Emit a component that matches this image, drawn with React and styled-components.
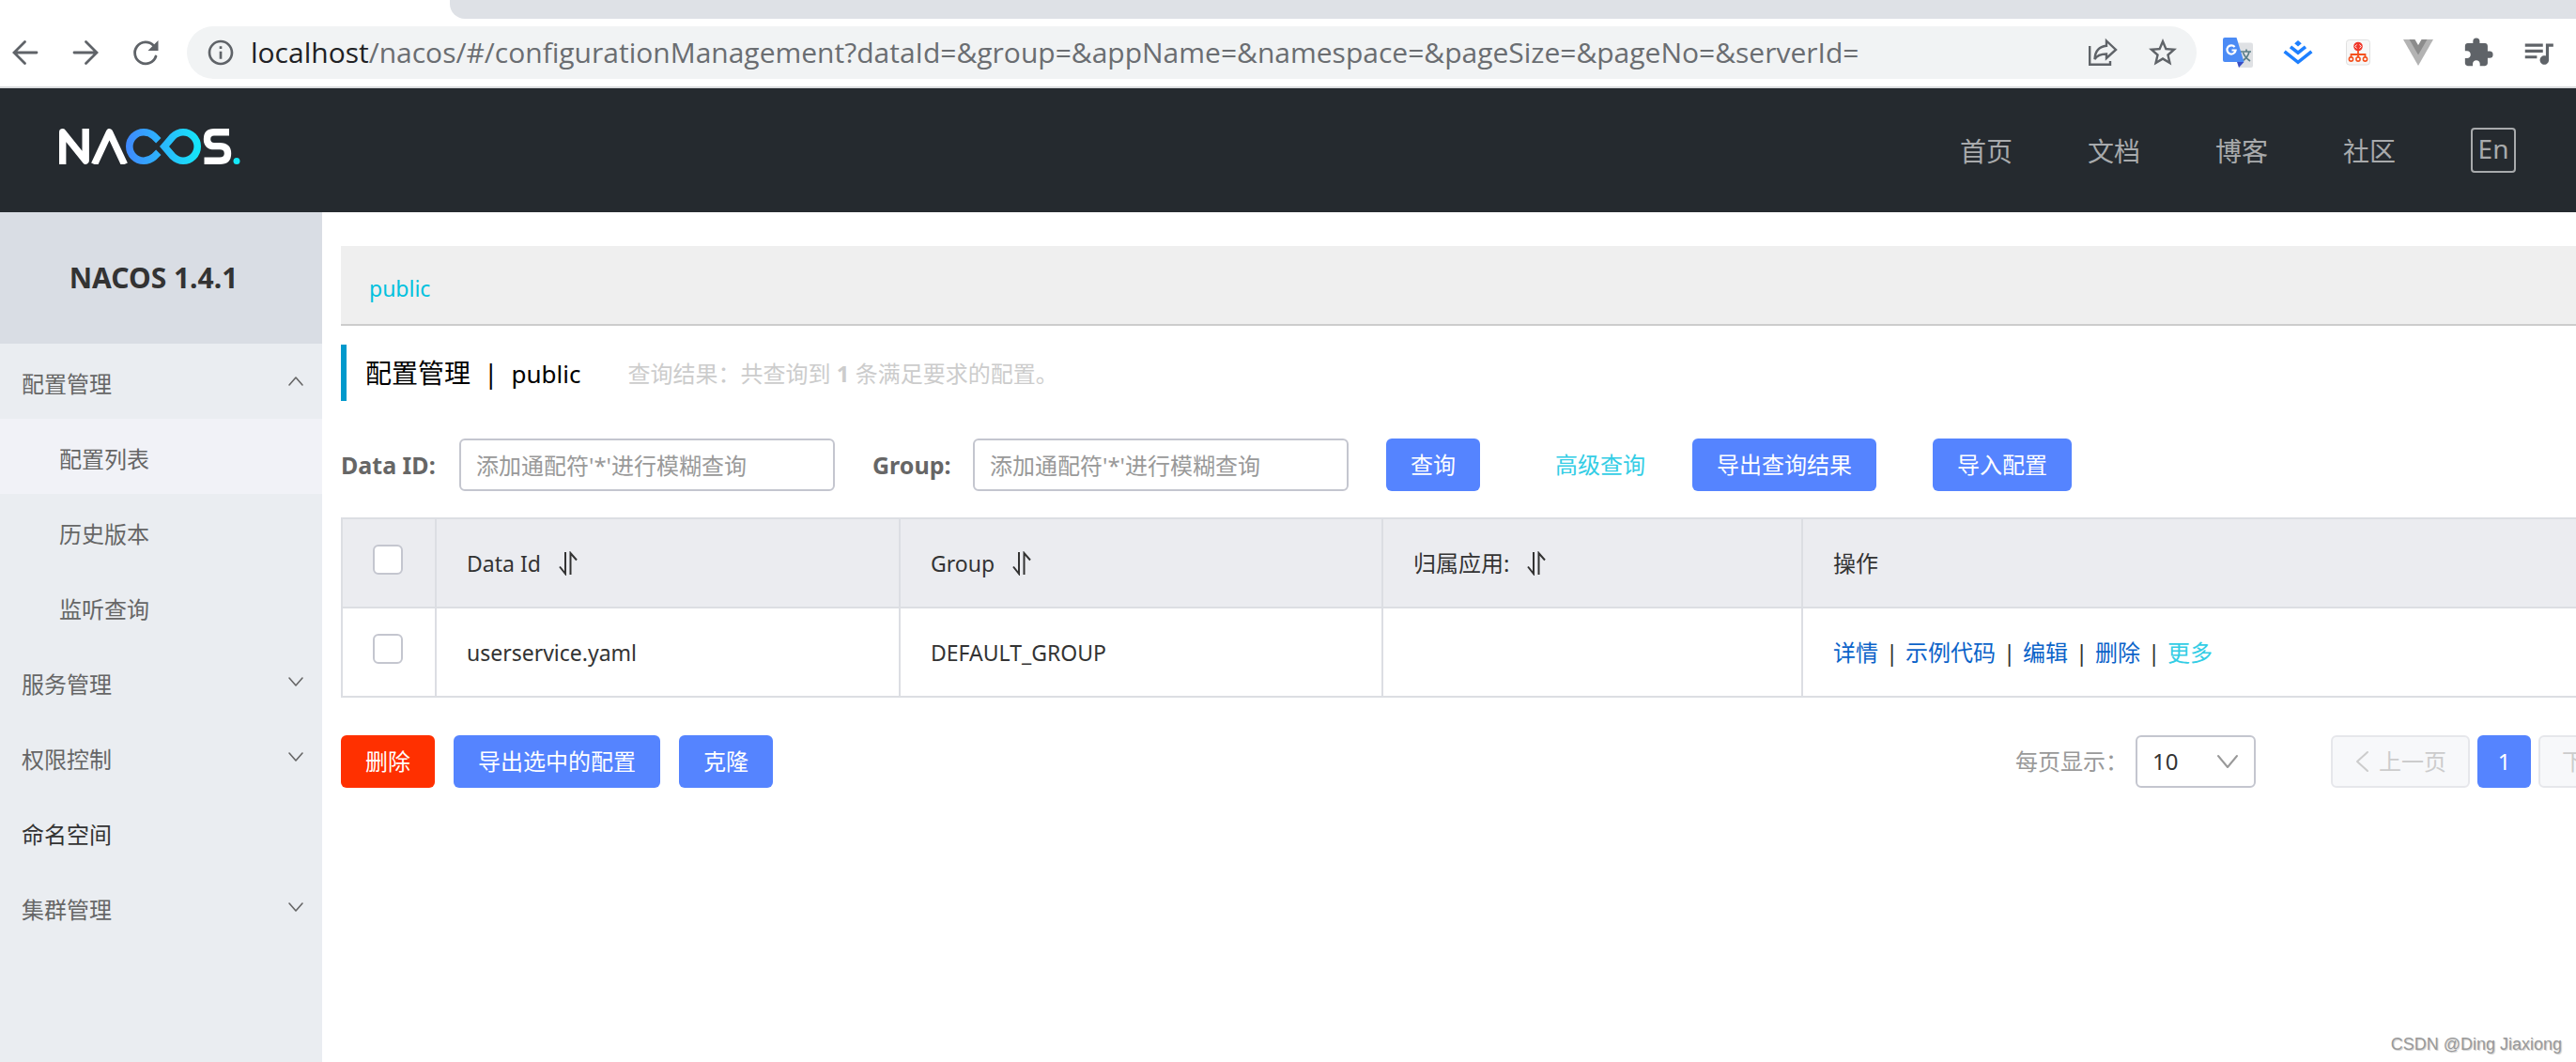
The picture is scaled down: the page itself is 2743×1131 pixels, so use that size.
import React, { useState } from 'react';
import styled, { createGlobalStyle } from 'styled-components';
import { MdInfoOutline, MdStarBorder, MdExtension, MdQueueMusic } from 'react-icons/md';

const UI_FONT = '"Noto Sans", "Noto Sans CJK SC", sans-serif';

const GlobalStyle = createGlobalStyle`
  *, *::before, *::after { box-sizing: border-box; }
  body {
    margin: 0;
    background: #fff;
    color: #333;
    font: 24px/36px ${UI_FONT};
  }
  button, input, select { font: inherit; margin: 0; }
  a { text-decoration: none; }
  button { cursor: pointer; }
`;

const Page = styled.div`
  display: flex;
  flex-direction: column;
  min-height: 100vh;
  overflow: hidden;
  position: relative;
`;

/* ---------- browser chrome ---------- */

const TabStrip = styled.div`
  height: 20px;
  margin-left: 479px;
  background: #dee1e6;
  border-bottom-left-radius: 16px;
`;

const Toolbar = styled.div`
  display: flex;
  align-items: center;
  height: 74px;
  padding: 8px 8px 8px 0;
  border-bottom: 2px solid #d9dbdd;
  color: #5f6368;
`;

const ToolButton = styled.button`
  display: flex;
  align-items: center;
  justify-content: center;
  flex: none;
  width: 64px;
  height: 56px;
  padding: 0;
  border: 0;
  background: none;
  color: inherit;
`;

const NavButtons = styled.div`
  display: flex;
  margin: 0 12px 0 -5px;
`;

const AddressBar = styled.div`
  display: flex;
  align-items: center;
  flex: 1;
  min-width: 0;
  height: 56px;
  padding: 0 4px 0 20px;
  border-radius: 28px;
  background: #f1f3f4;
`;

const Address = styled.div`
  flex: 1;
  min-width: 0;
  margin-left: 16px;
  overflow: hidden;
  white-space: nowrap;
  font: 30px/40px "Open Sans", "Noto Sans", sans-serif;
  color: #6a6d71;
  outline: none;
`;

const Host = styled.span`
  color: #202124;
`;

const Extensions = styled.div`
  display: flex;
  margin-left: 12px;
`;

/* ---------- site header ---------- */

const SiteHeader = styled.header`
  display: flex;
  align-items: center;
  justify-content: space-between;
  height: 132px;
  padding: 0 64px 0 63px;
  background: #252a2f;
`;

const LogoLink = styled.a`
  display: block;
  height: 38px;
  margin-bottom: 8px;
`;

const SiteNav = styled.nav`
  display: flex;
  align-items: center;
  gap: 80px;
`;

const SiteLink = styled.a`
  padding-top: 2px;
  font-size: 28px;
  line-height: 40px;
  color: #a8aaac;
`;

const LangButton = styled.button`
  width: 48px;
  height: 48px;
  padding: 0 0 4px;
  border: 2px solid #a8aaac;
  border-radius: 4px;
  background: none;
  color: #a8aaac;
  font-size: 28px;
  line-height: 40px;
`;

/* ---------- sidebar ---------- */

const Body = styled.div`
  display: flex;
  flex: 1;
`;

const Sidebar = styled.aside`
  flex: none;
  width: 343px;
  background: #eaedf1;
`;

const Version = styled.h1`
  margin: 0;
  padding-right: 16px;
  background: #d9dde4;
  font-size: 30px;
  line-height: 140px;
  text-align: center;
`;

const Menu = styled.ul`
  margin: 0;
  padding: 0;
  list-style: none;
`;

const MenuLink = styled.a`
  display: flex;
  align-items: center;
  justify-content: space-between;
  height: 80px;
  padding: 6px 19px 0 ${(p) => (p.$nested ? 63 : 23)}px;
  background: ${(p) => (p.$active ? '#f1f2f7' : 'transparent')};
  color: ${(p) => (p.$dark ? '#333' : '#666')};

  svg { margin-bottom: 6px; }
`;

/* ---------- main ---------- */

/* The panel runs on past the window's right edge. */
const Main = styled.main`
  flex: 1;
  min-width: 0;
  margin-right: -108px;
  padding: 36px 0 40px 20px;
`;

const NamespaceBar = styled.div`
  display: flex;
  align-items: center;
  height: 85px;
  padding: 6px 30px 0;
  border-bottom: 2px solid #ccc;
  background: #efefef;
`;

const NamespaceLink = styled.a`
  color: #00c1de;
  font-size: 23px;
`;

const TitleRow = styled.div`
  display: flex;
  align-items: center;
  height: 60px;
  margin: 20px 0 40px;
  padding-left: 20px;
  border-left: 6px solid #09c;
`;

const Title = styled.h2`
  display: flex;
  align-items: baseline;
  gap: 14px;
  margin: 0 50px 0 0;
  color: #000;
  font-size: 28px;
  font-weight: 400;
  line-height: 40px;
`;

const TitleSpace = styled.span`
  font-size: 26px;
`;

const Hint = styled.p`
  margin: 0;
  padding-top: 2px;
  color: #ccc;
`;

const SearchForm = styled.form`
  display: flex;
  align-items: center;
  margin-bottom: 28px;
`;

const Field = styled.div`
  display: flex;
  align-items: center;
  justify-content: space-between;
  width: ${(p) => p.$width}px;
  margin-right: 40px;
`;

const FieldLabel = styled.label`
  color: #666;
  font-size: 25px;
  font-weight: 700;
`;

const TextInput = styled.input`
  width: 400px;
  height: 56px;
  padding: 0 16px;
  border: 2px solid #c4c6cf;
  border-radius: 6px;
  background: #fff;
  color: #333;
  outline: none;

  &::placeholder { color: #999; opacity: 1; }
`;

const Button = styled.button`
  height: 56px;
  padding: 0 26px;
  border: 0;
  border-radius: 6px;
  background: ${(p) => (p.$danger ? '#ff3000' : '#5584ff')};
  color: #fff;
  white-space: nowrap;
`;

const Advanced = styled.a`
  margin: 0 50px 0 80px;
  color: #33cde5;
`;

const ExportButtons = styled.div`
  display: flex;
  gap: 60px;
`;

const Table = styled.table`
  width: 100%;
  table-layout: fixed;
  border-collapse: collapse;
  text-align: left;
`;

const Col = styled.col`
  width: ${(p) => (p.$width ? `${p.$width}px` : 'auto')};
`;

const Cell = styled.td`
  height: 95px;
  padding: 0 32px;
  border: 2px solid #dcdee3;
  font-size: ${(p) => (p.$latin ? 23 : 24)}px;
  font-weight: 400;
`;

const HeadCell = styled(Cell)`
  background: #ebecf0;
`;

const Sortable = styled.span`
  display: flex;
  align-items: center;
  gap: 18px;
`;

const Checkbox = styled.input`
  appearance: none;
  display: block;
  width: 32px;
  height: 32px;
  margin: 0 0 8px;
  border: 2px solid #c4c6cf;
  border-radius: 6px;
  background: #fff;

  &:checked { background: #5584ff; border-color: #5584ff; }
`;

const Actions = styled.div`
  display: flex;
`;

const ActionLink = styled.a`
  color: ${(p) => (p.$light ? '#33cde5' : '#0b63c9')};
`;

const Divider = styled.span`
  width: 29px;
  text-align: center;
`;

const Footer = styled.div`
  display: flex;
  justify-content: space-between;
  margin-top: 40px;
`;

const ButtonGroup = styled.div`
  display: flex;
  gap: 20px;
`;

const Pagination = styled.nav`
  display: flex;
  align-items: center;
  gap: 8px;
`;

const PageSize = styled.div`
  display: flex;
  align-items: center;
  gap: 8px;
  margin-right: 72px;
  color: #999;
`;

const SelectBox = styled.div`
  display: grid;
  align-items: center;
  width: 128px;

  > * { grid-area: 1 / 1; }
  > svg { justify-self: end; margin-right: 18px; pointer-events: none; }
`;

const Select = styled.select`
  appearance: none;
  width: 100%;
  height: 56px;
  padding: 0 16px;
  border: 2px solid #c4c6cf;
  border-radius: 6px;
  background: #fff;
  color: #333;
`;

const StepButton = styled.button`
  display: flex;
  align-items: center;
  justify-content: center;
  gap: 10px;
  width: 148px;
  height: 56px;
  padding: 0;
  border: 2px solid #e6e7eb;
  border-radius: 6px;
  background: #f7f8fa;
  color: #ccc;
`;

const PageButton = styled(Button)`
  width: 57px;
  padding: 0;
`;

const Watermark = styled.div`
  position: absolute;
  right: 15px;
  bottom: 5px;
  color: #999;
  font: 18px/28px "Liberation Sans", sans-serif;
  text-shadow: 1px 1px 1px #ccc;
`;

/* ---------- drawings ---------- */

const Chevron = ({ d, width, height, stroke = 'currentColor', weight = 1.6 }) => (
  <svg width={width} height={height} viewBox={`0 0 ${width} ${height}`} fill="none" stroke={stroke} strokeWidth={weight} strokeLinecap="round" strokeLinejoin="round" aria-hidden="true">
    <path d={d} />
  </svg>
);

const ChevronDown = () => <Chevron width={18} height={12} d="M2 2 L9 10 L16 2" />;
const ChevronUp = () => <Chevron width={18} height={12} d="M2 10 L9 2 L16 10" />;

const SortIcon = () => (
  <svg width="22" height="26" viewBox="0 0 22 26" fill="none" stroke="#333" strokeWidth="2" aria-hidden="true">
    <path d="M8 1 V24 L2 16.5" />
    <path d="M13.5 25 V2 L20 9.500" />
  </svg>
);

const Strokes = ({ children }) => (
  <svg width="32" height="32" viewBox="0 0 32 32" fill="none" stroke="currentColor" strokeWidth="2.8" strokeLinecap="round" aria-hidden="true">
    {children}
  </svg>
);

const BackIcon = () => (
  <Strokes><path d="M28 16 H5 M15.500 4.500 L4 16 L15.500 27.500" /></Strokes>
);
const ForwardIcon = () => (
  <Strokes><path d="M4 16 H27 M16.500 4.500 L28 16 L16.500 27.500" /></Strokes>
);
const ReloadIcon = () => (
  <Strokes>
    <path d="M27 20 A11.500 11.500 0 1 1 24.500 8.500" />
    <path d="M29.500 3 V14 H18.500 Z" fill="currentColor" stroke="none" />
  </Strokes>
);
const ShareIcon = () => (
  <svg width="32" height="32" viewBox="0 0 32 32" fill="none" stroke="currentColor" strokeWidth="2.400" aria-hidden="true">
    <path d="M2.200 9 V28.800 H24 V25" />
    <path d="M20 3.500 L30 13 L20 22 V17.500 C14 17.500 10 19 7.500 23 C8 15 12 9.500 20 8.800 Z" />
  </svg>
);
const TranslateIcon = () => (
  <svg width="32" height="32" viewBox="0 0 32 32" aria-hidden="true">
    <path d="M12 5.500 H30 Q32 5.500 32 7.500 V30 Q32 32 30 32 H17 Z" fill="#dfe1e4" />
    <path d="M19 15 H30 M25 12.500 V15 M28 15 C27 20 24 23 20.500 25 M21.500 16 C23 20 26 23 29 25" stroke="#5b7f88" strokeWidth="1.700" fill="none" />
    <path d="M15 26 H22.500 L17 32 Z" fill="#3a4fc4" />
    <path d="M2 0 H14.500 L22.500 26 H2 Q0 26 0 24 V2 Q0 0 2 0 Z" fill="#4b8bf5" />
    <path d="M12.600 10 A4.600 4.600 0 1 0 13.600 13.500 H9.500" stroke="#fff" strokeWidth="2.200" fill="none" />
  </svg>
);
const JuejinIcon = () => (
  <svg width="32" height="28" viewBox="0 0 32 28" fill="none" stroke="#1e80ff" strokeWidth="3.600" aria-hidden="true">
    <path d="M16 1 L19.800 4.200 L16 7.400 L12.200 4.200 Z" fill="#1e80ff" stroke="none" />
    <path d="M8 7.800 L16 14.200 L24 7.800" />
    <path d="M1.600 12.800 L16 24.300 L30.400 12.800" />
  </svg>
);
const TreeIcon = () => (
  <svg width="26" height="28" viewBox="0 0 26 28" fill="none" aria-hidden="true">
    <rect x="0.500" y="0.500" width="25" height="26.500" rx="3" fill="#f7f7f7" stroke="#e0e0e0" />
    <circle cx="13" cy="7.500" r="4.800" fill="#f0372a" />
    <path d="M11.500 5.500 L9.800 7.500 L11.500 9.500 M14.500 5.500 L16.200 7.500 L14.500 9.500" stroke="#fff" />
    <path d="M13 12 V19 M5.500 19 V16 H20.500 V19" stroke="#f4511e" strokeWidth="1.800" />
    <circle cx="5.500" cy="21" r="2.100" stroke="#f4511e" strokeWidth="1.600" fill="#fff" />
    <circle cx="13" cy="21" r="2.100" stroke="#f4511e" strokeWidth="1.600" fill="#fff" />
    <circle cx="20.500" cy="21" r="2.100" stroke="#f4511e" strokeWidth="1.600" fill="#fff" />
  </svg>
);
const VueIcon = () => (
  <svg width="32" height="28" viewBox="0 0 32 28" aria-hidden="true">
    <path d="M0 0 H32 L16 28 Z" fill="#b3b3b3" />
    <path d="M6.500 0 H12.500 L16 6 L19.500 0 H25.500 L16 16.500 Z" fill="#8c8c8c" />
    <path d="M12.500 0 H19.500 L16 6 Z" fill="#fff" />
  </svg>
);

const Logo = () => (
  <svg width="193" height="38" viewBox="0 0 193 38" fill="none" strokeLinejoin="round" role="img" aria-label="NACOS">
    <defs>
      <linearGradient id="logo-fade" gradientUnits="userSpaceOnUse" x1="71" y1="0" x2="151" y2="0">
        <stop offset="0" stopColor="#4088ff" />
        <stop offset="1" stopColor="#14e8f8" />
      </linearGradient>
    </defs>
    <g stroke="#fff" strokeWidth="7.400">
      <path d="M3.700 38 V3.800 L28.200 34.200 V0" />
      <path d="M37.500 38 L53.500 3.800 L69.500 38" />
      <path d="M181 3.800 H165 Q157.500 3.800 157.500 11.200 Q157.500 18.600 165 18.600 H171 Q179.500 18.600 179.500 26.500 Q179.500 34.300 171 34.300 H154.500" />
    </g>
    <g stroke="url(#logo-fade)" strokeWidth="7.600">
      <path d="M105.800 12.800 L101 8 Q96 3.800 90 3.800 A15.200 15.200 0 0 0 90 34.200 Q96 34.200 101 30 L105.800 25.200" />
      <path d="M112 19 L121 8.500 Q126 3.800 132 3.800 A15.200 15.200 0 0 1 132 34.200 Q126 34.200 121 29.500 Z" strokeLinejoin="miter" />
    </g>
    <circle cx="189" cy="34.500" r="3.500" fill="#14e8f8" />
  </svg>
);

/* ---------- data ---------- */

const MENU = [
  { text: '配置管理', icon: 'up' },
  { text: '配置列表', nested: true, active: true },
  { text: '历史版本', nested: true },
  { text: '监听查询', nested: true },
  { text: '服务管理', icon: 'down' },
  { text: '权限控制', icon: 'down' },
  { text: '命名空间', dark: true },
  { text: '集群管理', icon: 'down' },
];

const SITE_LINKS = ['首页', '文档', '博客', '社区'];
const ROWS = [{ dataId: 'userservice.yaml', group: 'DEFAULT_GROUP', app: '' }];
const ROW_ACTIONS = ['详情', '示例代码', '编辑', '删除'];
const WILDCARD = "添加通配符'*'进行模糊查询";

const BrowserBar = () => (
  <>
    <TabStrip />
    <Toolbar>
      <NavButtons>
        <ToolButton aria-label="Back"><BackIcon /></ToolButton>
        <ToolButton aria-label="Forward"><ForwardIcon /></ToolButton>
        <ToolButton aria-label="Reload"><ReloadIcon /></ToolButton>
      </NavButtons>
      <AddressBar>
        <MdInfoOutline size={32} />
        <Address role="textbox" aria-label="Address" tabIndex={0}>
          <Host>localhost</Host>/nacos/#/configurationManagement?dataId=&amp;group=&amp;appName=&amp;namespace=&amp;pageSize=&amp;pageNo=&amp;serverId=
        </Address>
        <ToolButton aria-label="Share"><ShareIcon /></ToolButton>
        <ToolButton aria-label="Bookmark"><MdStarBorder size={36} /></ToolButton>
      </AddressBar>
      <Extensions>
        <ToolButton aria-label="Translate"><TranslateIcon /></ToolButton>
        <ToolButton aria-label="Juejin"><JuejinIcon /></ToolButton>
        <ToolButton aria-label="Code tree"><TreeIcon /></ToolButton>
        <ToolButton aria-label="Vue"><VueIcon /></ToolButton>
        <ToolButton aria-label="Extensions"><MdExtension size={34} /></ToolButton>
        <ToolButton aria-label="Media"><MdQueueMusic size={38} /></ToolButton>
      </Extensions>
    </Toolbar>
  </>
);

const SideMenu = () => (
  <Sidebar>
    <Version>NACOS 1.4.1</Version>
    <Menu>
      {MENU.map((m) => (
        <li key={m.text}>
          <MenuLink href="#" $nested={m.nested} $active={m.active} $dark={m.dark}>
            {m.text}
            {m.icon === 'up' && <ChevronUp />}
            {m.icon === 'down' && <ChevronDown />}
          </MenuLink>
        </li>
      ))}
    </Menu>
  </Sidebar>
);

const ConfigTable = () => {
  const [checked, setChecked] = useState(false);
  const toggle = () => setChecked(!checked);
  return (
    <Table>
      <colgroup>
        <Col $width={100} />
        <Col $width={494} />
        <Col $width={514} />
        <Col $width={447} />
        <Col />
      </colgroup>
      <thead>
        <tr>
          <HeadCell as="th"><Checkbox type="checkbox" aria-label="全选" checked={checked} onChange={toggle} /></HeadCell>
          <HeadCell as="th" $latin><Sortable>Data Id<SortIcon /></Sortable></HeadCell>
          <HeadCell as="th" $latin><Sortable>Group<SortIcon /></Sortable></HeadCell>
          <HeadCell as="th"><Sortable>归属应用:<SortIcon /></Sortable></HeadCell>
          <HeadCell as="th">操作</HeadCell>
        </tr>
      </thead>
      <tbody>
        {ROWS.map((r) => (
          <tr key={r.dataId}>
            <Cell><Checkbox type="checkbox" aria-label={r.dataId} checked={checked} onChange={toggle} /></Cell>
            <Cell $latin>{r.dataId}</Cell>
            <Cell $latin>{r.group}</Cell>
            <Cell>{r.app}</Cell>
            <Cell>
              <Actions>
                {ROW_ACTIONS.map((a) => (
                  <React.Fragment key={a}>
                    <ActionLink href="#">{a}</ActionLink>
                    <Divider>|</Divider>
                  </React.Fragment>
                ))}
                <ActionLink href="#" $light>更多</ActionLink>
              </Actions>
            </Cell>
          </tr>
        ))}
      </tbody>
    </Table>
  );
};

export default function App() {
  return (
    <Page lang="zh-CN">
      <GlobalStyle />
      <BrowserBar />
      <SiteHeader>
        <LogoLink href="#"><Logo /></LogoLink>
        <SiteNav>
          {SITE_LINKS.map((t) => <SiteLink key={t} href="#">{t}</SiteLink>)}
          <LangButton>En</LangButton>
        </SiteNav>
      </SiteHeader>
      <Body>
        <SideMenu />
        <Main>
          <NamespaceBar><NamespaceLink href="#">public</NamespaceLink></NamespaceBar>
          <TitleRow>
            <Title><span>配置管理</span><span>|</span><TitleSpace>public</TitleSpace></Title>
            <Hint>查询结果：共查询到 <strong>1</strong> 条满足要求的配置。</Hint>
          </TitleRow>
          <SearchForm onSubmit={(e) => e.preventDefault()}>
            <Field $width={526}>
              <FieldLabel htmlFor="data-id">Data ID:</FieldLabel>
              <TextInput id="data-id" placeholder={WILDCARD} />
            </Field>
            <Field $width={507}>
              <FieldLabel htmlFor="group">Group:</FieldLabel>
              <TextInput id="group" placeholder={WILDCARD} />
            </Field>
            <Button type="submit">查询</Button>
            <Advanced href="#">高级查询</Advanced>
            <ExportButtons>
              <Button type="button">导出查询结果</Button>
              <Button type="button">导入配置</Button>
            </ExportButtons>
          </SearchForm>
          <ConfigTable />
          <Footer>
            <ButtonGroup>
              <Button $danger>删除</Button>
              <Button>导出选中的配置</Button>
              <Button>克隆</Button>
            </ButtonGroup>
            <Pagination>
              <PageSize>
                <label htmlFor="page-size">每页显示：</label>
                <SelectBox>
                  <Select id="page-size" defaultValue="10">
                    <option>10</option>
                    <option>20</option>
                    <option>30</option>
                  </Select>
                  <Chevron width={24} height={16} d="M2 2 L12 14 L22 2" stroke="#999" weight={2} />
                </SelectBox>
              </PageSize>
              <StepButton>
                <Chevron width={16} height={24} d="M14 2 L3 12 L14 22" weight={2} />
                上一页
              </StepButton>
              <PageButton>1</PageButton>
              <StepButton>
                下一页
                <Chevron width={16} height={24} d="M2 2 L13 12 L2 22" weight={2} />
              </StepButton>
            </Pagination>
          </Footer>
        </Main>
      </Body>
      <Watermark>CSDN @Ding Jiaxiong</Watermark>
    </Page>
  );
}
